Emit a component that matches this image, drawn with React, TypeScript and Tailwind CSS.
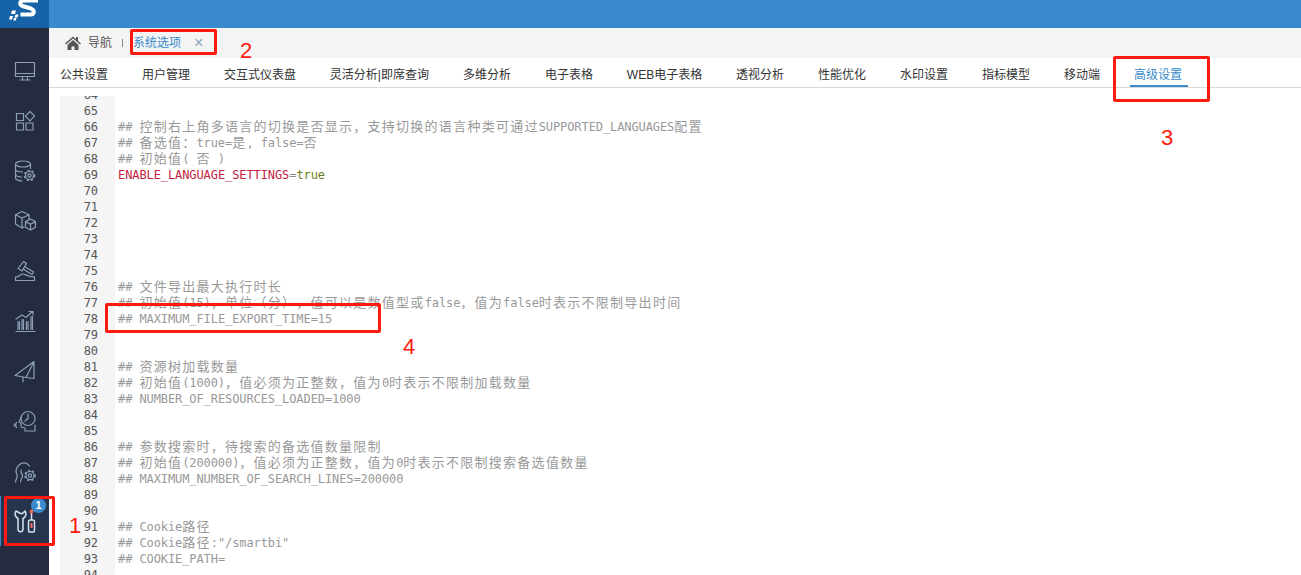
import React from "react";

const tabs = [
  "公共设置",
  "用户管理",
  "交互式仪表盘",
  "灵活分析|即席查询",
  "多维分析",
  "电子表格",
  "WEB电子表格",
  "透视分析",
  "性能优化",
  "水印设置",
  "指标模型",
  "移动端",
];

// 64 到 94 行的配置内容
const lines: Record<number, string> = {
  66: "## 控制右上角多语言的切换是否显示，支持切换的语言种类可通过SUPPORTED_LANGUAGES配置",
  67: "## 备选值：true=是, false=否",
  68: "## 初始值( 否 )",
  76: "## 文件导出最大执行时长",
  77: "## 初始值(15)，单位（分），值可以是数值型或false，值为false时表示不限制导出时间",
  78: "## MAXIMUM_FILE_EXPORT_TIME=15",
  81: "## 资源树加载数量",
  82: "## 初始值(1000)，值必须为正整数，值为0时表示不限制加载数量",
  83: "## NUMBER_OF_RESOURCES_LOADED=1000",
  86: "## 参数搜索时，待搜索的备选值数量限制",
  87: "## 初始值(200000)，值必须为正整数，值为0时表示不限制搜索备选值数量",
  88: "## MAXIMUM_NUMBER_OF_SEARCH_LINES=200000",
  91: "## Cookie路径",
  92: '## Cookie路径:"/smartbi"',
  93: "## COOKIE_PATH=",
};

const lineNumbers = Array.from({ length: 31 }, (_, i) => i + 64);

const CodeText = ({ text }: { text: string }) => {
  // 中文字符占两列
  const parts = text.match(/[^\x00-\x7f]+|[\x00-\x7f]+/g) || [];
  return (
    <>
      {parts.map((p, i) =>
        /^[^\x00-\x7f]/.test(p) ? (
          <span key={i} className="text-[13px] tracking-[1.26px] [text-spacing-trim:space-all] [font-feature-settings:'palt'_0]">
            {p}
          </span>
        ) : (
          <span key={i}>{p}</span>
        )
      )}
    </>
  );
};

const SideIcon = ({ children }: { children: React.ReactNode }) => (
  <svg
    width="26"
    height="26"
    viewBox="0 0 26 26"
    fill="none"
    stroke="#8ba0b8"
    strokeWidth="1.2"
    strokeLinejoin="round"
    strokeLinecap="round"
  >
    {children}
  </svg>
);

const Gear = ({ x, y }: { x: number; y: number }) => (
  <>
    <circle cx={x} cy={y} r="1.6" />
    <circle cx={x} cy={y} r="4" />
    <circle cx={x} cy={y} r="5" strokeWidth="1.6" strokeLinecap="butt" strokeDasharray="2 2.2" />
  </>
);

const sideIcons = [
  <SideIcon key="monitor">
    <rect x="3.5" y="4.5" width="19" height="14" />
    <path d="M3.5 15.5h19M10.5 18.5v3M15.5 18.5v3M8 22h10" />
  </SideIcon>,
  <SideIcon key="apps">
    <rect x="4.5" y="5.5" width="7" height="7" />
    <rect x="4.5" y="15" width="7" height="7" />
    <rect x="14" y="15" width="7" height="7" />
    <path d="M18 3.5l4.6 4.7-4.6 4.7-4.6-4.7z" />
  </SideIcon>,
  <SideIcon key="db">
    <ellipse cx="11" cy="6" rx="7.5" ry="3" />
    <path d="M3.500 6v14c0 1.800 3.400 3 6.500 3M18.500 6v4.500M3.500 11c0 1.800 3.400 3 7 3M3.500 16c0 1.800 3 3 6 3" />
    <Gear x={17.500} y={17.500} />
  </SideIcon>,
  <SideIcon key="cubes">
    <path d="M10 3.500l7 3.200v4.300M10 3.500L3.500 6.700v9.300l6.500 4 2-1M3.500 6.700l6.500 3.300 7-3.300M10 10v10" />
    <path d="M18.500 11l5 2.600v5.600l-5 2.800-5-2.800v-5.600zM13.500 13.600l5 2.600 5-2.600M18.500 16.200V22" />
  </SideIcon>,
  <SideIcon key="hammer">
    <path d="M3.500 22.500v-3.500c4 0 5-3 7.500-3s4 3 11.500 2.800v3.700z" />
    <path d="M6 10.500L11.500 3.500l3 2-4.500 7.500zM12.500 8.500l9 5.500-1.500 2.500-9-5.500" />
  </SideIcon>,
  <SideIcon key="chart">
    <path d="M4 23.500h19M6 21.500v-8M10 21.500v-10M14.500 21.500v-8M19 21.500v-13M7.500 21.500v-8M11.500 21.500v-10M16 21.500v-8M20.500 21.500v-13" />
    <path d="M4 11l6-4 4 2.500L20 4M17 3.500h4v3.500" />
  </SideIcon>,
  <SideIcon key="plane">
    <path d="M22 3.500L3 17.500l8 1.500 3 0.500zM22 3.500l-8 16 8 1zM11 19v5" />
  </SideIcon>,
  <SideIcon key="head">
    <path d="M9 9.500L7 14l2 1v4l4 1v3h10v-6" />
    <circle cx="16" cy="10.500" r="7" />
    <path d="M16 6v4.500l-3 2.500M4.500 14.500c-1 1.500-1 3.500 0 5M2.500 16c-.5.800-.5 1.500 0 2.200" />
  </SideIcon>,
  <SideIcon key="person">
    <path d="M3.500 24c0-3 2.500-4 1.500-7-1.500-3-1-7 2-10 3-3 8-3 10.500 1" />
    <path d="M8.500 24c0-3 2.500-4.500 2-7-1-1-2-2.500-1.500-5" />
    <Gear x={18} y={17.500} />
  </SideIcon>,
];

export default function App() {
  return (
    <div className="relative flex h-[575px] w-[1301px] overflow-hidden bg-white font-['Liberation_Sans','Noto_Sans_CJK_SC',sans-serif]">
      {/* 左侧导航 */}
      <aside className="flex w-[49px] shrink-0 flex-col bg-[#262c3f]">
        <div className="h-[28px] overflow-hidden bg-[#1763a8]">
          <svg width="49" height="28" viewBox="0 0 49 28">
            <path
              d="M38 0.500H24.500C19.500 0.500 19 4.500 22.500 6L31 8.500C35 10 34.500 14.500 30.500 14.500H20.500"
              fill="none"
              stroke="#fff"
              strokeWidth="4"
            />
            <path d="M12 10.500h4l-1 3.500h-4zM15.500 14.500h3l-1 3h-3zM10 16h3l-1 3.500H9zM14 18h2.500l-.8 2.500h-2.500z" fill="#fff" />
          </svg>
        </div>
        <div className="h-[18px]" />
        {sideIcons.map((icon, i) => (
          <div key={i} className="flex h-[50px] items-center justify-center">
            {icon}
          </div>
        ))}
        <div className="relative flex h-[50px] items-center justify-center border-l border-[#3a8bcd] bg-[#26344d]">
          <svg width="22" height="24" viewBox="0 0 22 24" fill="none" stroke="#d5e2ee" strokeWidth="1.500" strokeLinejoin="round">
            <path d="M2 2c-1.800 3-.8 6 2 7.500V20c0 3.500 5 3.500 5 0V9.500c2.800-1.500 3.800-4.500 2-7.500L8.500 4.500h-2z" />
            <rect x="14.500" y="11" width="6" height="12" rx="1.800" />
            <path d="M17.500 11V4" />
            <circle cx="17.500" cy="2.500" r="1.200" fill="#ef6c5a" stroke="#ef6c5a" />
            <path d="M17.500 14v5" stroke="#ef6c5a" strokeWidth="2" />
          </svg>
          <span className="absolute left-[30px] top-[2px] flex h-[15px] w-[15px] items-center justify-center rounded-full bg-[#3a8bcd] text-[11px] font-bold leading-none text-white">
            1
          </span>
        </div>
      </aside>

      <main className="flex min-w-0 flex-1 flex-col">
        <div className="h-[28px] shrink-0 bg-[#3a8bcd]" />
        {/* 页签栏 */}
        <div className="flex h-[30px] shrink-0 items-center bg-[#f4f4f4] pl-[16px] text-[12px]">
          <svg width="16" height="14" viewBox="0 0 16 14" fill="#555">
            <path d="M8 0.500L0 7.500l1 1L8 2.500l7 6 1-1-3-2.600V1h-2v2.200zM2.500 9v5h4v-3.500h3V14h4V9L8 4z" />
          </svg>
          <span className="ml-[7px] text-[#555]">导航</span>
          <span className="ml-[10px] h-[8px] w-px bg-[#888]" />
          <span className="ml-[10px] text-[#3a8bcd]">系统选项</span>
          <span className="ml-[13px] text-[16px] leading-none text-[#8aa4c0]">×</span>
        </div>
        {/* 功能页签 */}
        <div className="flex h-[30px] shrink-0 items-center gap-[33.95px] border-b border-[#d9d9d9] pl-[11px] pt-[4px] text-[12px] text-[#333]">
          {tabs.map((t) => (
            <span key={t} className="whitespace-nowrap">
              {t}
            </span>
          ))}
          <span className="relative whitespace-nowrap pt-[1px] text-[#3a8bcd]">
            高级设置
            <span className="absolute -left-[4px] -right-[6px] top-[20px] h-[2px] bg-[#3a8bcd]" />
          </span>
        </div>
        {/* 编辑器 */}
        <div className="mt-[8px] ml-[11px] min-h-0 flex-1 overflow-hidden">
          <div className="-mt-[9px] font-['DejaVu_Sans_Mono','Noto_Sans_CJK_SC',monospace] text-[12px] leading-[16px] tracking-[-0.09px]">
            {lineNumbers.map((n) => (
              <div key={n} className="flex h-[16px]">
                <div className="w-[55px] shrink-0 bg-[#f5f5f5] pr-[17px] text-right text-[#555]">{n}</div>
                <div className="whitespace-pre pl-[3px] text-[#999]">
                  {n === 69 ? (
                    <>
                      <span className="text-[#c5223f]">ENABLE_LANGUAGE_SETTINGS</span>
                      <span className="text-[#888]">=</span>
                      <span className="text-[#6b7f1a]">true</span>
                    </>
                  ) : lines[n] ? (
                    <CodeText text={lines[n]} />
                  ) : null}
                </div>
              </div>
            ))}
          </div>
        </div>
      </main>

      {/* 红色标注 */}
      <div className="absolute left-[4px] top-[496px] h-[50px] w-[51px] rounded-[2px] border-[3px] border-[#ff1a10]" />
      <div className="absolute left-[130px] top-[29px] h-[26px] w-[87px] rounded-[2px] border-[3px] border-[#ff1a10]" />
      <div className="absolute left-[1113px] top-[56px] h-[46px] w-[97px] rounded-[2px] border-[3px] border-[#ff1a10]" />
      <div className="absolute left-[105px] top-[303px] h-[30px] w-[276px] rounded-[2px] border-[3px] border-[#ff1a10]" />
      <span className="absolute left-[69px] top-[512px] text-[22px] leading-[28px] text-[#ff1a10]">1</span>
      <span className="absolute left-[240px] top-[37px] text-[22px] leading-[28px] text-[#ff1a10]">2</span>
      <span className="absolute left-[1161px] top-[124px] text-[22px] leading-[28px] text-[#ff1a10]">3</span>
      <span className="absolute left-[403px] top-[333px] text-[22px] leading-[28px] text-[#ff1a10]">4</span>
    </div>
  );
}
